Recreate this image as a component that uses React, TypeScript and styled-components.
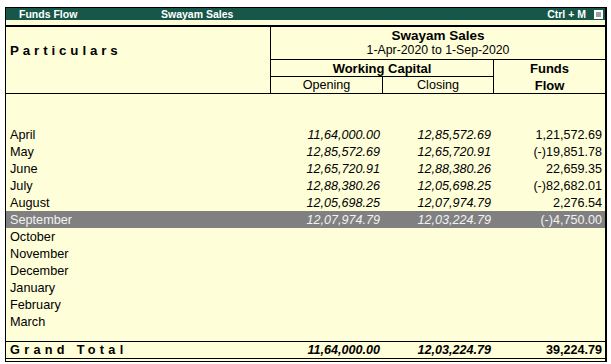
import styled, { createGlobalStyle } from 'styled-components';

const GlobalStyle = createGlobalStyle`
  body {
    margin: 0;
    background: #ffffff;
    font-family: "Liberation Sans", Arial, sans-serif;
  }
`;

const Frame = styled.div`
  width: 599px;
  margin: 7px 0 0 5px;
  border: 1px solid #000000;
  border-right-width: 2px;
  background: #fefed9;
  color: #000000;
`;

const TitleBar = styled.div`
  display: flex;
  align-items: center;
  height: 12px;
  padding: 0 2px 0 13px;
  background: #17574a;
  color: #ffffff;
  font-size: 10.5px;
  font-weight: 700;
`;

const TitleName = styled.span`
  width: 142px;
`;

const TitleCompany = styled.span`
  flex: 1;
`;

const Shortcut = styled.span`
  margin-right: 8px;
`;

const CloseBox = styled.span`
  display: flex;
  align-items: center;
  justify-content: center;
  width: 9px;
  height: 9px;
  background: #ffffff;

  &::after {
    content: '';
    width: 5px;
    height: 5px;
    background: #a0a0a0;
  }
`;

const Strip = styled.div`
  height: 5px;
  border-bottom: 2px solid #000000;
`;

const Header = styled.div`
  display: grid;
  grid-template-columns: 265px 112px 111px 1fr;
  grid-template-rows: 32px 17px 17px;
  border-bottom: 1px solid #000000;
`;

const ParticularsHead = styled.div`
  grid-column: 1;
  grid-row: 1 / 4;
  padding: 16px 0 0 4px;
  line-height: 15px;
  border-right: 1px solid #000000;
  font-size: 13.3px;
  font-weight: 700;
  letter-spacing: 3.9px;
`;

const CompanyHead = styled.div`
  grid-column: 2 / 5;
  grid-row: 1;
  display: flex;
  flex-direction: column;
  align-items: center;
  padding-top: 1px;
  line-height: 15px;
`;

const CompanyName = styled.span`
  font-size: 13.5px;
  font-weight: 700;
`;

const Period = styled.span`
  font-size: 12.3px;
`;

const HeadCell = styled.div<{ $col: string; $row: string; $bold?: boolean; $last?: boolean }>`
  grid-column: ${({ $col }) => $col};
  grid-row: ${({ $row }) => $row};
  display: flex;
  flex-direction: column;
  align-items: center;
  justify-content: center;
  line-height: 17px;
  border-top: 1px solid #000000;
  border-right: ${({ $last }) => ($last ? 'none' : '1px solid #000000')};
  font-size: ${({ $bold }) => ($bold ? '13px' : '12.6px')};
  font-weight: ${({ $bold }) => ($bold ? 700 : 400)};
`;

const Body = styled.div`
  display: flex;
  flex-direction: column;
  padding: 32px 0 11px;
`;

const Row = styled.div<{ $selected?: boolean }>`
  display: grid;
  grid-template-columns: 265px 112px 111px 1fr;
  height: 17px;
  align-items: center;
  font-size: 12.7px;
  background: ${({ $selected }) => ($selected ? '#808080' : 'transparent')};
  color: ${({ $selected }) => ($selected ? '#f2f2f2' : '#000000')};
`;

const Month = styled.span`
  padding-left: 4px;
`;

const Amount = styled.span<{ $italic?: boolean }>`
  text-align: right;
  padding-right: 3px;
  font-size: 12.6px;
  font-style: ${({ $italic }) => ($italic ? 'italic' : 'normal')};
`;

const TotalRow = styled.div`
  display: grid;
  grid-template-columns: 265px 112px 111px 1fr;
  height: 16px;
  align-items: center;
  border-top: 1px solid #000000;
  border-bottom: 1px solid #000000;
  margin-bottom: 2px;
  font-weight: 700;
  font-size: 12.7px;
`;

const TotalLabel = styled.span`
  padding-left: 4px;
  letter-spacing: 4.3px;
`;

type MonthRow = {
  name: string;
  opening?: string;
  closing?: string;
  flow?: string;
};

const months: MonthRow[] = [
  { name: 'April', opening: '11,64,000.00', closing: '12,85,572.69', flow: '1,21,572.69' },
  { name: 'May', opening: '12,85,572.69', closing: '12,65,720.91', flow: '(-)19,851.78' },
  { name: 'June', opening: '12,65,720.91', closing: '12,88,380.26', flow: '22,659.35' },
  { name: 'July', opening: '12,88,380.26', closing: '12,05,698.25', flow: '(-)82,682.01' },
  { name: 'August', opening: '12,05,698.25', closing: '12,07,974.79', flow: '2,276.54' },
  { name: 'September', opening: '12,07,974.79', closing: '12,03,224.79', flow: '(-)4,750.00' },
  { name: 'October' },
  { name: 'November' },
  { name: 'December' },
  { name: 'January' },
  { name: 'February' },
  { name: 'March' },
];

export default function App() {
  return (
    <>
      <GlobalStyle />
      <Frame>
        <TitleBar>
          <TitleName>Funds Flow</TitleName>
          <TitleCompany>Swayam Sales</TitleCompany>
          <Shortcut>Ctrl + M</Shortcut>
          <CloseBox />
        </TitleBar>
        <Strip />
        <Header>
          <ParticularsHead>Particulars</ParticularsHead>
          <CompanyHead>
            <CompanyName>Swayam Sales</CompanyName>
            <Period>1-Apr-2020 to 1-Sep-2020</Period>
          </CompanyHead>
          <HeadCell $col="2 / 4" $row="2" $bold>Working Capital</HeadCell>
          <HeadCell $col="2" $row="3">Opening</HeadCell>
          <HeadCell $col="3" $row="3">Closing</HeadCell>
          <HeadCell $col="4" $row="2 / 4" $bold $last>
            <span>Funds</span>
            <span>Flow</span>
          </HeadCell>
        </Header>
        <Body>
          {months.map((m) => (
            <Row key={m.name} $selected={m.name === 'September'}>
              <Month>{m.name}</Month>
              <Amount $italic>{m.opening}</Amount>
              <Amount $italic>{m.closing}</Amount>
              <Amount>{m.flow}</Amount>
            </Row>
          ))}
        </Body>
        <TotalRow>
          <TotalLabel>Grand Total</TotalLabel>
          <Amount $italic>11,64,000.00</Amount>
          <Amount $italic>12,03,224.79</Amount>
          <Amount>39,224.79</Amount>
        </TotalRow>
      </Frame>
    </>
  );
}
